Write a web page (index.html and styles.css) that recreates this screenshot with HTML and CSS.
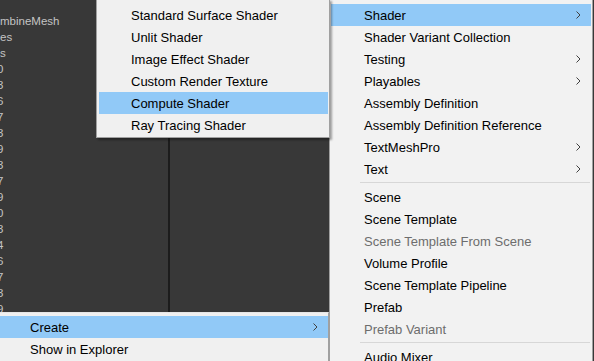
FILE: index.html
```html
<!doctype html>
<html>
 <head>
  <title>Project - Create</title>
  <meta name="viewport" content="width=device-width, initial-scale=1">
  <link rel="stylesheet" href="styles.css">
 </head>
 <body>
  <div class="project">
   <ul class="assets">
    <li>mbineMesh</li>
    <li>es</li>
    <li>s</li>
    <li><span class="cut">0</span></li>
    <li><span class="cut">3</span></li>
    <li><span class="cut">6</span></li>
    <li><span class="cut">7</span></li>
    <li><span class="cut">3</span></li>
    <li><span class="cut">9</span></li>
    <li><span class="cut">3</span></li>
    <li><span class="cut">7</span></li>
    <li><span class="cut">9</span></li>
    <li><span class="cut">0</span></li>
    <li><span class="cut">3</span></li>
    <li><span class="cut">4</span></li>
    <li><span class="cut">6</span></li>
    <li><span class="cut">7</span></li>
    <li><span class="cut">3</span></li>
    <li><span class="cut">9</span></li>
   </ul>
   <div class="divider"></div>
   <div class="preview"></div>
  </div>

  <div class="menu context-menu">
   <div class="item active">Create <svg class="chevron" width="5" height="8" viewBox="0 0 5 8"><polyline points="0.5,0.5 4,4 0.5,7.5"/></svg></div>
   <div class="item">Show in Explorer</div>
  </div>

  <div class="menu create-menu">
   <div class="item active">Shader <svg class="chevron" width="5" height="8" viewBox="0 0 5 8"><polyline points="0.5,0.5 4,4 0.5,7.5"/></svg></div>
   <div class="item">Shader Variant Collection</div>
   <div class="item">Testing <svg class="chevron" width="5" height="8" viewBox="0 0 5 8"><polyline points="0.5,0.5 4,4 0.5,7.5"/></svg></div>
   <div class="item">Playables <svg class="chevron" width="5" height="8" viewBox="0 0 5 8"><polyline points="0.5,0.5 4,4 0.5,7.5"/></svg></div>
   <div class="item">Assembly Definition</div>
   <div class="item">Assembly Definition Reference</div>
   <div class="item">TextMeshPro <svg class="chevron" width="5" height="8" viewBox="0 0 5 8"><polyline points="0.5,0.5 4,4 0.5,7.5"/></svg></div>
   <div class="item">Text <svg class="chevron" width="5" height="8" viewBox="0 0 5 8"><polyline points="0.5,0.5 4,4 0.5,7.5"/></svg></div>
   <div class="sep"></div>
   <div class="item">Scene</div>
   <div class="item">Scene Template</div>
   <div class="item disabled">Scene Template From Scene</div>
   <div class="item">Volume Profile</div>
   <div class="item">Scene Template Pipeline</div>
   <div class="item">Prefab</div>
   <div class="item disabled">Prefab Variant</div>
   <div class="sep"></div>
   <div class="item">Audio Mixer</div>
  </div>

  <div class="menu shader-menu">
   <div class="item">Standard Surface Shader</div>
   <div class="item">Unlit Shader</div>
   <div class="item">Image Effect Shader</div>
   <div class="item">Custom Render Texture</div>
   <div class="item active">Compute Shader</div>
   <div class="item">Ray Tracing Shader</div>
  </div>
 </body>
</html>
```

FILE: styles.css
```css
html, body {
 margin: 0;
 height: 100%;
 overflow: hidden;
}
body {
 position: relative;
 background-color: #383838;
 font-family: "Liberation Sans", Arial, sans-serif;
}
.project {
 display: flex;
 height: 312px;
}
.assets {
 list-style: none;
 margin: 0;
 padding: 13px 0 0;
 width: 168px;
 color: #c4c4c4;
 font-size: 11.5px;
 line-height: 16px;
 overflow: hidden;
}
.cut {
 display: inline-block;
 margin-left: -3px;
}
.divider {
 width: 2px;
 background-color: #1c1c1c;
}
.preview {
 flex: 1;
}
.menu {
 position: absolute;
 box-sizing: border-box;
 overflow: hidden;
 background-color: #f0f0f0;
 color: #000;
 font-size: 13px;
}
.item {
 display: flex;
 align-items: center;
 height: 22px;
 padding-left: 32px;
 white-space: nowrap;
}
.item.active {
 background-color: #91c9f7;
}
.item.disabled {
 color: #6d6d6d;
}
.chevron {
 margin-left: auto;
 margin-right: 10px;
 fill: none;
 stroke: #404040;
 stroke-width: 1;
}
.sep {
 height: 1px;
 margin: 2px 1px 3px 29px;
 background-color: #d7d7d7;
}
.context-menu {
 left: 0;
 top: 312px;
 width: 329px;
 bottom: 0;
 padding-top: 3px;
 border-top: 1px solid #e6e6e6;
 border-right: 1px solid #a0a0a0;
}
.context-menu .item {
 padding-left: 30px;
}
.create-menu {
 left: 329px;
 top: 0;
 width: 264px;
 bottom: 0;
 padding: 4px 1px 0;
 border-left: 1px solid #a0a0a0;
 border-right: 1px solid #a0a0a0;
 background-color: #f2f2f2;
}
.create-menu .item {
 padding-left: 33px;
}
.shader-menu {
 left: 96px;
 top: -1px;
 width: 234px;
 padding: 4px 1px 1px 2px;
 border: 1px solid #a0a0a0;
 box-shadow: 2px 2px 2px rgba(0, 0, 0, 0.35);
}
```
